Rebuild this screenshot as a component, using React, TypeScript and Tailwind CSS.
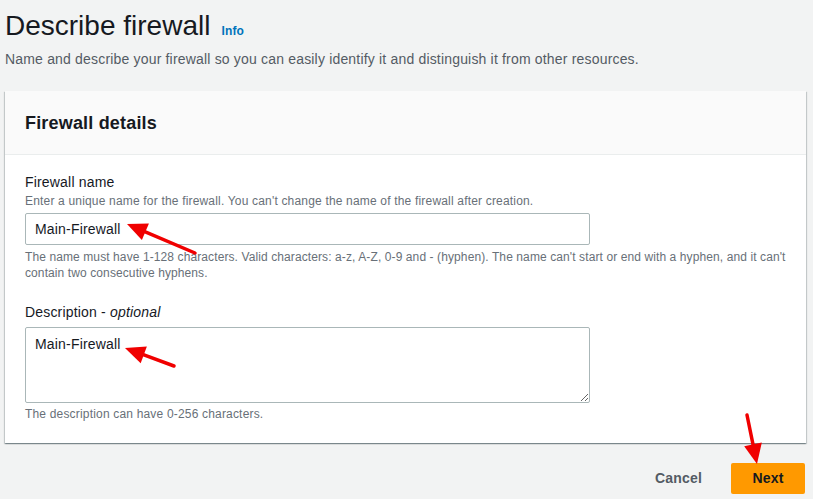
import React from 'react';

// ─── Red annotation arrow (tip = where it points) ─────────────────────────────

function Arrow({ tail, tip, head = 20, half = 9 }: { tail: [number, number]; tip: [number, number]; head?: number; half?: number }) {
  const [x1, y1] = tail;
  const [x2, y2] = tip;
  const dx = x2 - x1;
  const dy = y2 - y1;
  const len = Math.hypot(dx, dy);
  const ux = dx / len;
  const uy = dy / len;
  const bx = x2 - ux * head;
  const by = y2 - uy * head;
  const pts = `${x2},${y2} ${bx - uy * half},${by + ux * half} ${bx + uy * half},${by - ux * half}`;
  return (
    <g>
      <line x1={x1} y1={y1} x2={bx + ux * 2} y2={by + uy * 2} stroke="#f00000" strokeWidth={3.5} strokeLinecap="round" />
      <polygon points={pts} fill="#f00000" />
    </g>
  );
}

export default function App() {
  return (
    <div
      className="relative w-[813px] h-[499px] overflow-hidden bg-[#f2f3f3] text-[#16191f] pl-[5px] pr-[7px] tracking-[0.18px]"
      style={{ fontFamily: '"Liberation Sans", Arial, sans-serif' }}
    >
      {/* ── Título ── */}
      <div className="flex items-baseline gap-[11px] pt-[8px]">
        <h1 className="text-[28px] leading-[36px] font-normal tracking-normal">Describe firewall</h1>
        <span className="text-[12px] font-bold text-[#0073bb]">Info</span>
      </div>
      <p className="text-[14px] leading-[22px] text-[#545b64] mt-[4px]">
        Name and describe your firewall so you can easily identify it and distinguish it from other resources.
      </p>

      {/* ── Card ── */}
      <div className="mt-[21px] bg-white shadow-[0_1px_1px_0_rgba(0,28,36,0.3),1px_1px_1px_0_rgba(0,28,36,0.15),-1px_1px_1px_0_rgba(0,28,36,0.15)]">
        <div className="h-[64px] flex items-center px-[20px] bg-[#fafafa] border-b border-[#eaeded]">
          <h2 className="text-[18px] font-bold leading-[22px]">Firewall details</h2>
        </div>

        <div className="px-[20px] pt-[16px] pb-[21px]">
          <label className="block text-[14px] leading-[22px]">Firewall name</label>
          <p className="text-[12px] leading-[16px] text-[#687078]">
            Enter a unique name for the firewall. You can't change the name of the firewall after creation.
          </p>
          <input
            readOnly
            value="Main-Firewall"
            className="mt-[4px] block w-[565px] h-[32px] px-[9px] text-[14px] border border-[#aab7b8] rounded-[2px] bg-white outline-none"
          />
          <p className="mt-[4px] text-[12px] leading-[16px] text-[#687078] tracking-[0.1px]">
            The name must have 1-128 characters. Valid characters: a-z, A-Z, 0-9 and - (hyphen). The name can't start or end with a hyphen, and it can't contain two consecutive hyphens.
          </p>

          <label className="block mt-[20px] text-[14px] leading-[22px]">
            Description - <i>optional</i>
          </label>
          <textarea
            readOnly
            value="Main-Firewall"
            className="mt-[4px] block w-[565px] h-[76px] px-[9px] pt-[5px] text-[14px] leading-[22px] border border-[#aab7b8] rounded-[2px] bg-white outline-none resize-y"
          />
          <p className="mt-[3px] text-[12px] leading-[16px] text-[#687078]">
            The description can have 0-256 characters.
          </p>
        </div>
      </div>

      {/* ── Ações ── */}
      <div className="flex justify-end items-center gap-[29px] mt-[20px] pr-[1px]">
        <button className="text-[14px] font-bold text-[#545b64]">Cancel</button>
        <button className="w-[74px] h-[31px] rounded-[2px] bg-[#ff9900] text-[14px] font-bold text-[#16191f]">Next</button>
      </div>

      {/* ── Setas de anotação ── */}
      <svg className="absolute inset-0 pointer-events-none" width={813} height={499}>
        <Arrow tail={[195, 253]} tip={[127, 224]} />
        <Arrow tail={[174, 366]} tip={[125, 348]} />
        <Arrow tail={[747, 415]} tip={[757, 464]} />
      </svg>
    </div>
  );
}
